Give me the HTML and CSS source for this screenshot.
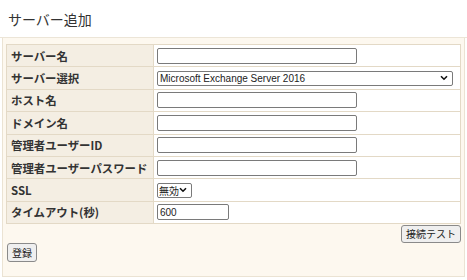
FILE: index.html
```html
<!DOCTYPE html>
<html lang="ja">
<head>
<meta charset="utf-8">
<link rel="stylesheet" href="styles.css">
</head>
<body>
<div class="header"><h1 class="title">サーバー追加</h1></div>
<div class="panel">
  <table class="form">
    <tr><th>サーバー名</th><td><input class="txt" type="text"></td></tr>
    <tr><th>サーバー選択</th><td><select class="sel sel-wide"><option>Microsoft Exchange Server 2016</option></select></td></tr>
    <tr><th>ホスト名</th><td><input class="txt" type="text"></td></tr>
    <tr><th>ドメイン名</th><td><input class="txt" type="text"></td></tr>
    <tr><th>管理者ユーザーID</th><td><input class="txt" type="text"></td></tr>
    <tr><th>管理者ユーザーパスワード</th><td><input class="txt" type="text"></td></tr>
    <tr><th>SSL</th><td><select class="sel sel-small"><option>無効</option></select></td></tr>
    <tr><th>タイムアウト(秒)</th><td><input class="txt short" type="text" value="600"></td></tr>
  </table>
  <div class="actions"><button class="btn">接続テスト</button></div>
  <div class="submit"><button class="btn">登録</button></div>
</div>
</body>
</html>
```
FILE: styles.css
```css
html, body {
  margin: 0;
  padding: 0;
  background: #ffffff;
  font-family: "Noto Sans CJK JP", "Noto Sans", sans-serif;
  color: #333333;
}
.header {
  height: 37px;
  border-bottom: 1px solid #ece5d7;
  display: flex;
  align-items: center;
  padding-left: 8px;
}
.title {
  margin: 0;
  font-size: 14px;
  font-weight: normal;
  color: #333;
  line-height: 1;
}
.panel {
  margin: 0 2px;
  height: 239px;
  box-sizing: border-box;
  background: #fdf8ef;
  border: 1px solid #ebe3d3;
  border-top: none;
  padding: 6px 3px 0 3px;
}
.form {
  width: 100%;
  border-collapse: collapse;
  border: 1px solid #e3d9c6;
}
.form th, .form td {
  border: 1px solid #e3d9c6;
  height: 21.4px;
  padding: 0;
}
.form th {
  width: 142px;
  background: #f4eee3;
  text-align: left;
  font-size: 11.4px;
  font-weight: bold;
  padding-left: 4px;
  color: #333;
  white-space: nowrap;
}
.form td {
  background: #ffffff;
  padding-left: 3px;
}
input.txt, .sel {
  display: block;
  box-sizing: border-box;
  font-family: "Liberation Sans", Arial, sans-serif;
  font-size: 10px;
  color: #222;
  margin: 0;
}
input.txt {
  width: 200px;
  height: 16px;
  border: 1px solid #7a7a7a;
  border-radius: 2px;
  padding: 0 2px;
}
input.short {
  width: 72px;
}
.sel {
  appearance: none;
  -webkit-appearance: none;
  height: 15px;
  padding: 0 0 0 2px;
  border: 1px solid #7a7a7a;
  border-radius: 2px;
  background-color: #ffffff;
  background-image: url("data:image/svg+xml,%3Csvg xmlns='http://www.w3.org/2000/svg' width='8' height='6' viewBox='0 0 8 6'%3E%3Cpath d='M1 1.2 L4 4.2 L7 1.2' fill='none' stroke='%23111' stroke-width='1.6'/%3E%3C/svg%3E");
  background-repeat: no-repeat;
  background-position: right 4px center;
  background-size: 8px 6px;
  line-height: 13px;
}
.sel-wide {
  width: 296px;
}
.sel-small {
  width: 35px;
  font-family: "Noto Sans CJK JP", sans-serif;
  padding-left: 1px;
}
.actions {
  display: flex;
  justify-content: flex-end;
  padding-top: 1px;
}
.submit {
  display: flex;
}
.btn {
  font-family: "Noto Sans CJK JP", sans-serif;
  font-size: 10px;
  color: #222;
  background: #efefef;
  border: 1px solid #8a8a8a;
  border-radius: 3px;
  height: 18px;
  padding: 0 4px;
  line-height: 1;
}
.submit .btn {
  height: 19px;
  margin-left: 1px;
}
```
